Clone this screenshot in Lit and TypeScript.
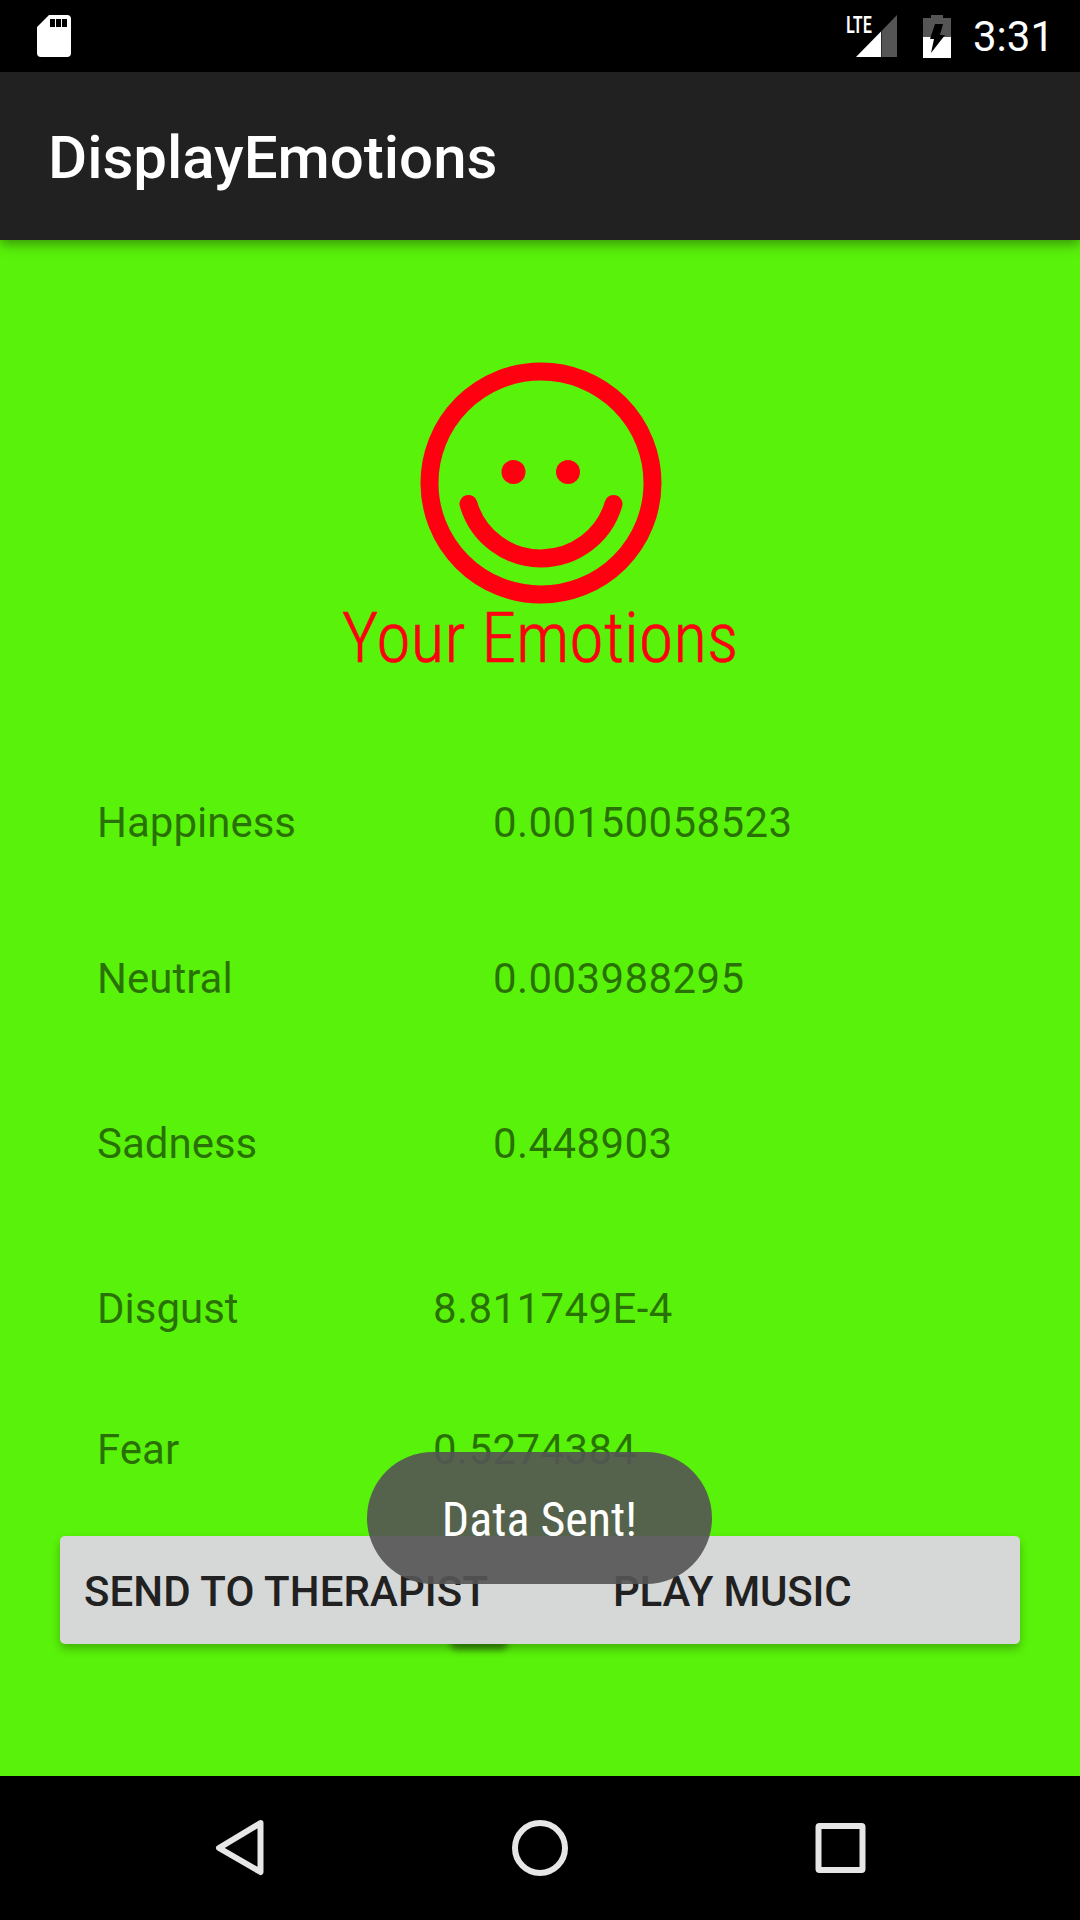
import { LitElement, html, css } from 'lit';
import { customElement } from 'lit/decorators.js';

const emotions = [
  { name: 'Happiness', value: '0.00150058523', cls: 'wide first' },
  { name: 'Neutral', value: '0.003988295', cls: 'wide neutral' },
  { name: 'Sadness', value: '0.448903', cls: 'wide sadness' },
  { name: 'Disgust', value: '8.811749E-4', cls: 'narrow disgust' },
  { name: 'Fear', value: '0.5274384', cls: 'narrow fear' },
];

@customElement('app-root')
export class AppRoot extends LitElement {
  static styles = css`
    :host {
      display: block;
      width: 1080px;
      height: 1920px;
      font-family: Roboto, "Liberation Sans", sans-serif;
    }

    .screen {
      display: flex;
      flex-direction: column;
      height: 100%;
      background: #000;
    }

    .status {
      height: 72px;
      flex: none;
      background: #000;
      display: flex;
      align-items: flex-start;
      justify-content: space-between;
    }

    .sd {
      margin: 15px 0 0 37px;
    }

    .status-right {
      display: flex;
      align-items: flex-start;
    }

    .status-icons {
      margin-top: 14px;
      overflow: visible;
    }

    .lte {
      font-size: 23px;
      font-weight: 500;
      font-stretch: 75%;
      fill: #fff;
    }

    .time {
      color: #fff;
      font-size: 42px;
      line-height: 74px;
      margin: 0 29px 0 18px;
      width: 78px;
    }

    .toolbar {
      height: 168px;
      flex: none;
      box-sizing: border-box;
      padding-top: 3px;
      background: #212121;
      box-shadow: 0 4px 12px rgba(0, 0, 0, 0.4);
      position: relative;
      z-index: 1;
      display: flex;
      align-items: center;
      padding-left: 48px;
      color: #fff;
      font-size: 60px;
      font-weight: 500;
    }

    .content {
      flex: 1;
      position: relative;
      background: #59f20a;
      display: flex;
      flex-direction: column;
      overflow: hidden;
    }

    .hero {
      display: flex;
      flex-direction: column;
      align-items: center;
      padding-top: 122px;
    }

    .smiley {
      display: block;
      margin-left: 2px;
    }

    .hero-title {
      color: #ff0010;
      font-family: Roboto, sans-serif;
      font-weight: 300;
      font-stretch: 75%;
      font-size: 70px;
      line-height: 70px;
      margin-top: -1px;
      -webkit-text-stroke: 0.6px #ff0010;
    }

    .rows {
      padding-left: 97px;
      display: flex;
      flex-direction: column;
    }

    .row {
      display: flex;
      height: 50px;
      line-height: 50px;
      font-size: 42px;
      color: rgba(0, 0, 0, 0.54);
    }

    .row .name {
      flex: none;
    }

    .row .value {
      letter-spacing: 0.4px;
    }

    .wide .name { width: 396px; }
    .narrow .name { width: 336px; }

    .first { margin-top: 125px; }
    .neutral { margin-top: 106px; }
    .sadness { margin-top: 115px; }
    .disgust { margin-top: 115px; }
    .fear { margin-top: 91px; }

    .actions {
      position: absolute;
      left: 60px;
      top: 1296px;
      width: 960px;
      height: 108px;
      box-sizing: border-box;
      background: #d6d7d7;
      border-radius: 5px;
      box-shadow: 0 5px 8px rgba(0, 0, 0, 0.25);
      display: flex;
      padding: 31px 0 0 24px;
      font-size: 42px;
      line-height: 50px;
      font-weight: 500;
      color: #212121;
    }

    .actions .send {
      width: 529px;
      letter-spacing: 0.1px;
    }

    .actions .music {
      letter-spacing: -0.2px;
    }

    .smudge {
      position: absolute;
      left: 450px;
      top: 1396px;
      width: 58px;
      height: 14px;
      border-radius: 7px;
      background: rgba(0, 0, 0, 0.4);
      filter: blur(3px);
    }

    .toast {
      position: absolute;
      left: 367px;
      top: 1212px;
      width: 345px;
      height: 132px;
      box-sizing: border-box;
      padding-top: 2px;
      border-radius: 66px;
      background: rgba(85, 85, 85, 0.91);
      display: flex;
      align-items: center;
      justify-content: center;
      color: #fff;
      font-size: 48px;
      font-stretch: 75%;
    }

    .nav {
      height: 144px;
      flex: none;
      background: #000;
    }

    .nav svg {
      display: block;
    }
  `;

  render() {
    return html`
      <div class="screen">
        <div class="status">
          <svg class="sd" width="34" height="42" viewBox="0 0 34 42">
            <path fill="#fff" fill-rule="evenodd" d="M12 0h18a4 4 0 0 1 4 4v34a4 4 0 0 1-4 4H4a4 4 0 0 1-4-4V12zM13 4v8h5V4zM19 4v8h5V4zM25 4v8h5V4z"/>
          </svg>
          <div class="status-right">
            <svg class="status-icons" width="110" height="46" viewBox="0 0 110 46">
              <text class="lte" x="1" y="19" textLength="26" lengthAdjust="spacingAndGlyphs">LTE</text>
              <path fill="#fff" d="M11 43 36 17.400V43z"/>
              <path fill="#555" d="M36.500 17 52 1v42H36.500z"/>
              <path fill="#555" d="M86 1h12v3h8v19H78V4h8z"/>
              <path fill="#fff" d="M78 23h28v21H78z"/>
              <path fill="#000" d="M90 10h8l-3 11h5L86 39l3-14h-4z"/>
            </svg>
            <div class="time">3:31</div>
          </div>
        </div>

        <div class="toolbar">DisplayEmotions</div>

        <div class="content">
          <div class="hero">
            <svg class="smiley" width="242" height="242" viewBox="0 0 242 242">
              <g fill="none" stroke="#ff0010" stroke-width="18" stroke-linecap="round">
                <circle cx="121" cy="121" r="111.500"/>
                <path d="M48.500 142A75.500 75.500 0 0 0 193.500 142"/>
              </g>
              <circle cx="93.500" cy="110" r="12" fill="#ff0010"/>
              <circle cx="148" cy="110" r="12" fill="#ff0010"/>
            </svg>
            <div class="hero-title">Your Emotions</div>
          </div>

          <div class="rows">
            ${emotions.map(e => html`
              <div class="row ${e.cls}">
                <div class="name">${e.name}</div>
                <div class="value">${e.value}</div>
              </div>
            `)}
          </div>

          <div class="smudge"></div>
          <div class="actions">
            <div class="send">SEND TO THERAPIST</div>
            <div class="music">PLAY MUSIC</div>
          </div>
          <div class="toast">Data Sent!</div>
        </div>

        <div class="nav">
          <svg width="1080" height="144" viewBox="0 0 1080 144">
            <g fill="none" stroke="#e6e6e6" stroke-width="6" stroke-linejoin="round">
              <path d="M260.500 47 219 72 260.500 96z"/>
              <circle cx="540" cy="72" r="25"/>
              <rect x="818.500" y="50" width="44" height="44" rx="1"/>
            </g>
          </svg>
        </div>
      </div>
    `;
  }
}
